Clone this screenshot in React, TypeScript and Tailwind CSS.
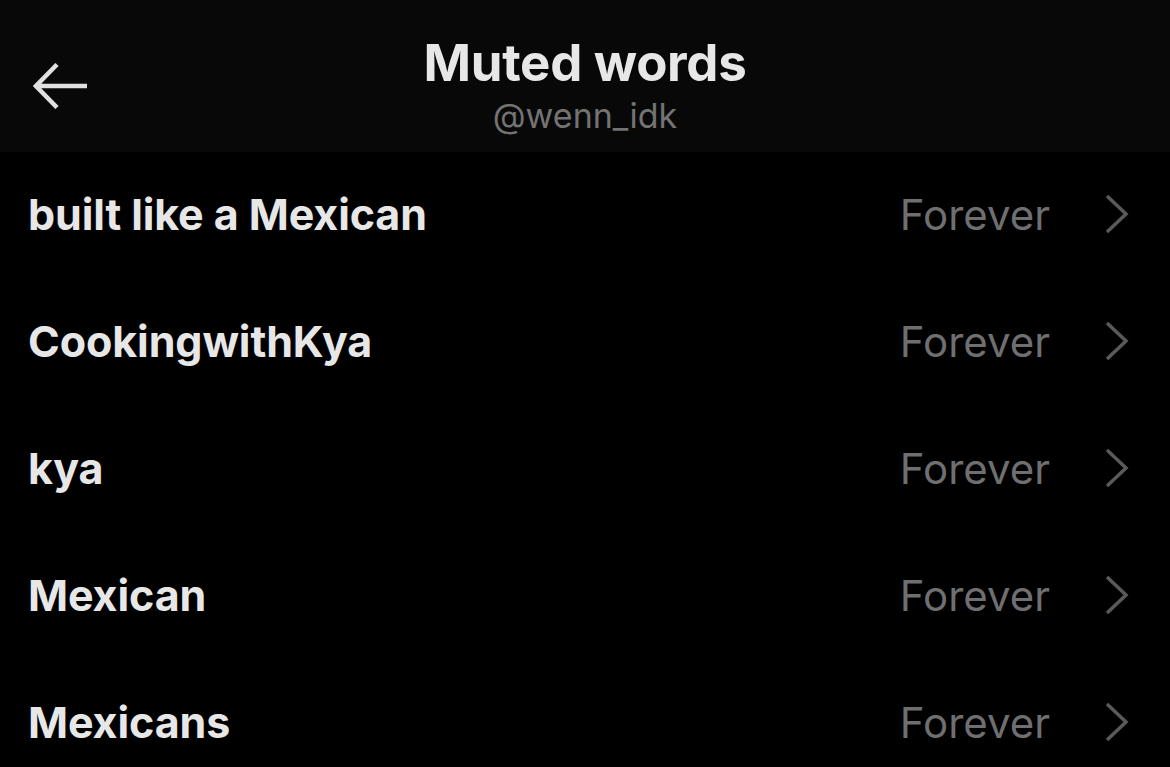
const words = ['built like a Mexican', 'CookingwithKya', 'kya', 'Mexican', 'Mexicans']

function BackArrow() {
  return (
    <svg width="56" height="46" viewBox="0 0 56 46" fill="none" stroke="#e0e0e0" strokeWidth="4.5">
      <path d="M2 23h52" />
      <path d="M24 1.5L3 23l21 21.5" />
    </svg>
  )
}

function Chevron() {
  return (
    <svg width="26" height="40" viewBox="0 0 26 40" fill="none" stroke="#5a5a5c" strokeWidth="3.5">
      <path d="M3 2l19 18L3 38" />
    </svg>
  )
}

export default function App() {
  return (
    <div className="min-h-screen w-full bg-black text-[#e7e7e7] font-['Inter',sans-serif]">
      <header className="relative flex h-[152px] flex-col items-center justify-center bg-[#080808] pt-[20px]">
        <button type="button" className="absolute left-[33px] top-[63px]" aria-label="Back">
          <BackArrow />
        </button>
        <h1 className="text-[51px] font-bold leading-[54px] tracking-[-0.3px]">Muted words</h1>
        <p className="mt-[6px] text-[34px] leading-[40px] text-[#737373]">@wenn_idk</p>
      </header>
      <ul>
        {words.map((w) => (
          <li key={w} className="flex h-[127px] items-center pb-[3px] pl-[28px] pr-[40px]">
            <span className="flex-1 text-[43px] font-bold tracking-[-0.1px]">{w}</span>
            <span className="mr-[54px] text-[42px] text-[#6f6f71]">Forever</span>
            <Chevron />
          </li>
        ))}
      </ul>
    </div>
  )
}
